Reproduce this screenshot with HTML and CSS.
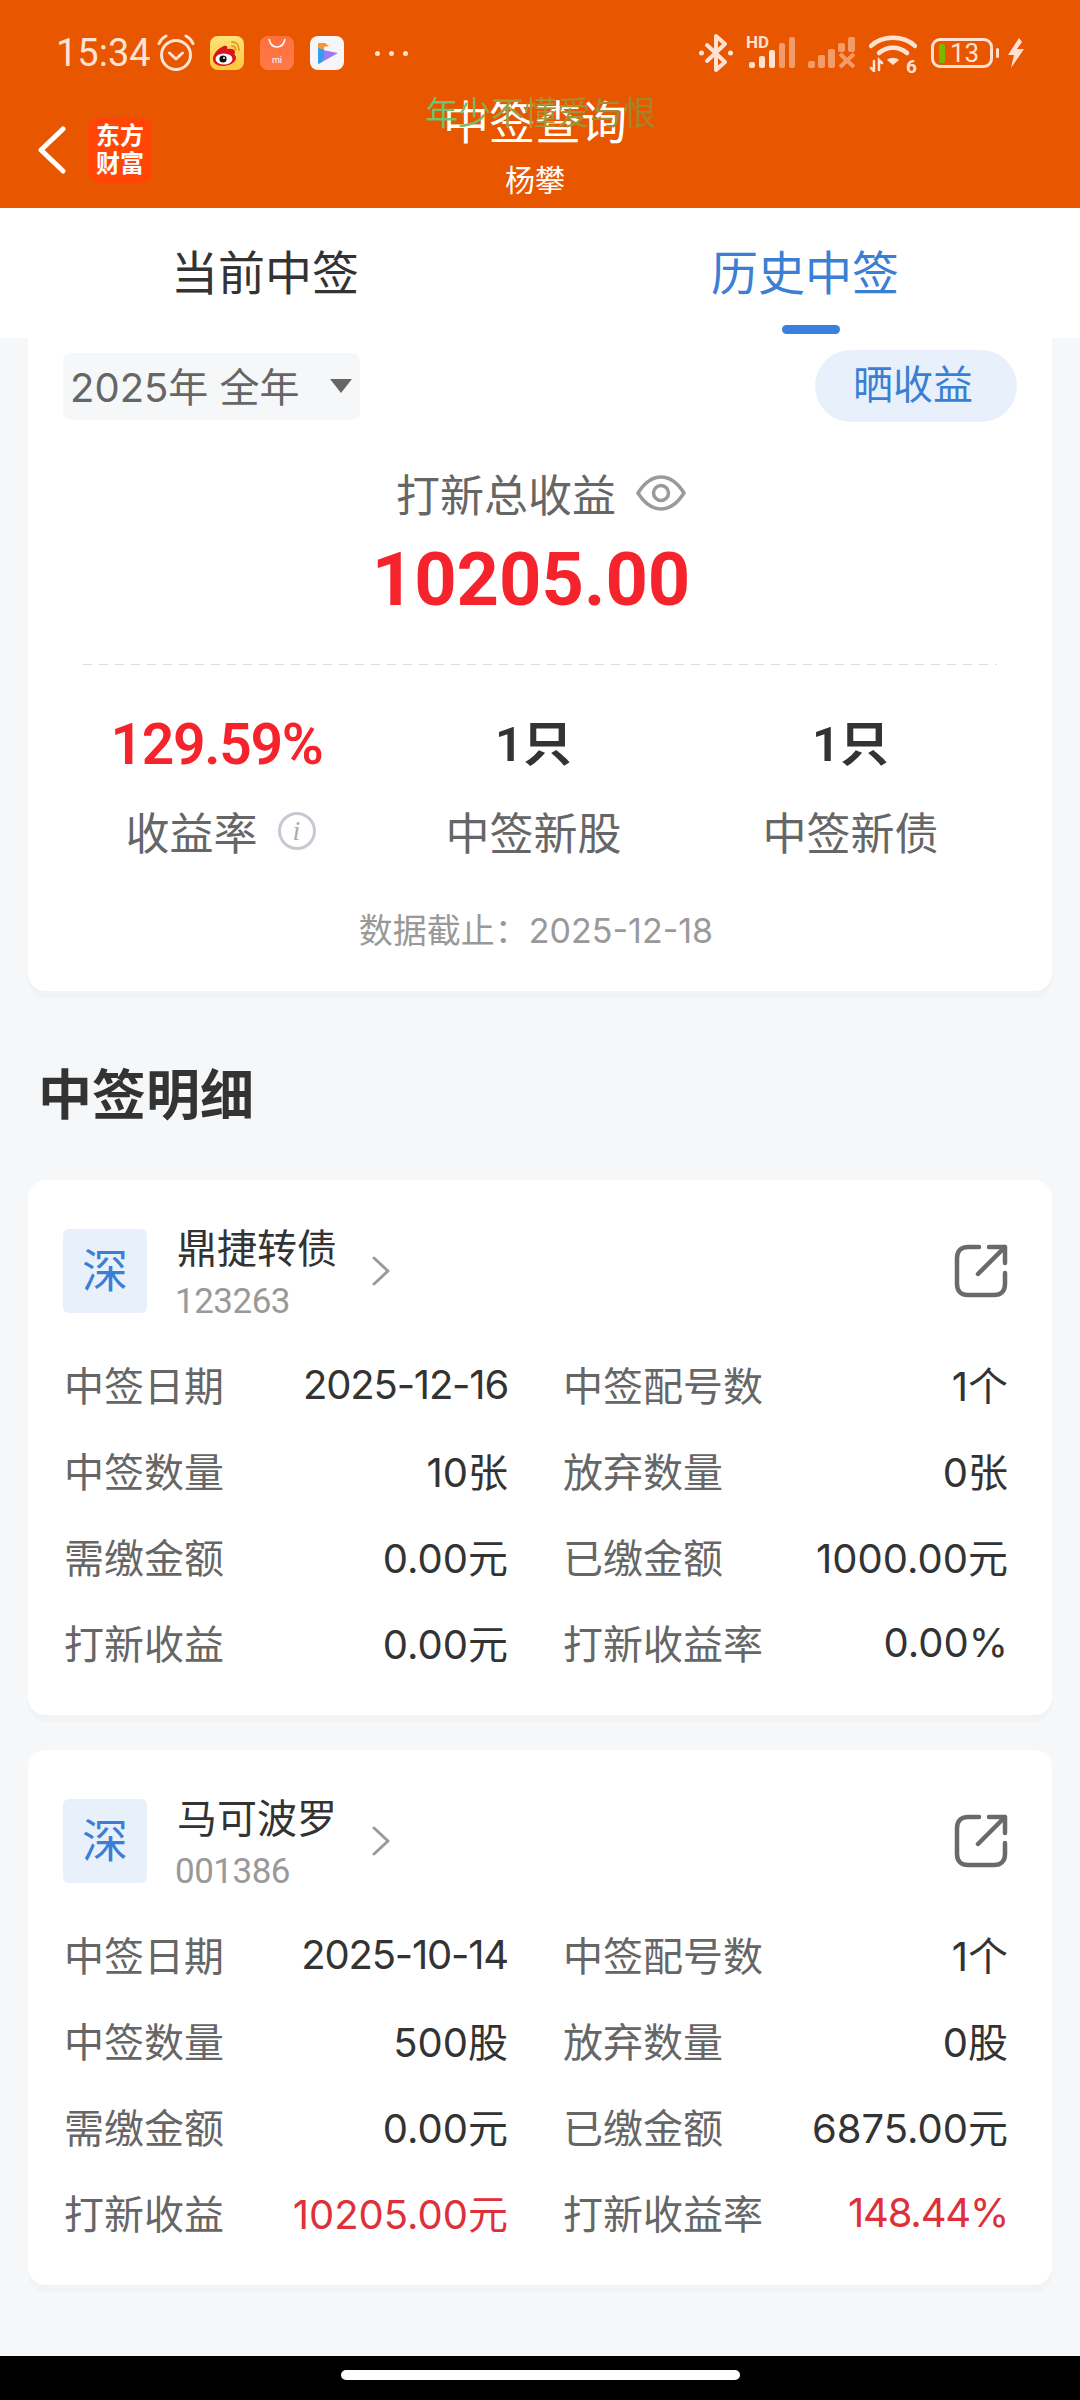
FILE: index.html
```html
<!DOCTYPE html>
<html lang="zh-CN">
<head>
    <meta charset="UTF-8">
    <meta name="viewport" content="width=device-width, initial-scale=1.0">
    <title>中签查询</title>
    <link rel="stylesheet" href="styles.css">
</head>
<body>
    <div class="page">
        <!-- Topo laranja: barra de status + navegação -->
        <header class="top">
            <div class="status">
                <div class="status-left">
                    <span class="time">15:34</span>
                    <svg class="ic-alarm" viewBox="0 0 40 38" fill="none" stroke="#ffe2d2" stroke-linecap="round" stroke-linejoin="round">
                        <circle cx="20" cy="21" r="14.5" stroke-width="3"/>
                        <path d="M13.5 19l6.5 6 6.5-6" stroke-width="3"/>
                        <path d="M3 9.5C4.5 6 7 3.5 10 2M37 9.5C35.500 6 33 3.500 30 2" stroke-width="3"/>
                    </svg>
                    <svg class="ic-app" viewBox="0 0 34 34">
                        <defs>
                            <linearGradient id="wb" x1="0" y1="0" x2="0" y2="1">
                                <stop offset="0" stop-color="#ffe27a"/>
                                <stop offset="1" stop-color="#fcc93a"/>
                            </linearGradient>
                        </defs>
                        <rect width="34" height="34" rx="8" fill="url(#wb)"/>
                        <path d="M3 23c0-5 5-11 11-13 3-1 4 1 3 3 4-1 8 0 8 3 0 1 0 2-1 2 1 1 2 2 2 4 0 4-6 8-13 8-6 0-10-3-10-7z" fill="#d9141c"/>
                        <ellipse cx="14" cy="23" rx="8.500" ry="5.500" fill="#fff"/>
                        <circle cx="13" cy="23" r="3.600" fill="#111"/>
                        <circle cx="14" cy="22" r="1" fill="#fff"/>
                        <path d="M22 6c4 0 7 3 7 8M22 10c2 0 3.500 1.500 3.500 4" fill="none" stroke="#eb9a22" stroke-width="2" stroke-linecap="round"/>
                    </svg>
                    <div class="ic-app mi-app">
                        <svg viewBox="0 0 34 12" class="mi-smile" fill="none" stroke="#fff" stroke-width="1.500"><path d="M9 1c1 5 4 8 8 8s7-3 8-8"/></svg>
                        <span class="mi-text">mi</span>
                    </div>
                    <svg class="ic-app" viewBox="0 0 34 34">
                        <rect width="34" height="34" rx="8" fill="#f6f6f9"/>
                        <path d="M8 7h7l4 3-5 1v6l-6 4z" fill="#f0993a"/>
                        <path d="M8 13l20 4-16 9-4 2z" fill="#9a7cf0"/>
                        <path d="M8 12l6 2v6l-2 6-4 2z" fill="#2f9df0"/>
                    </svg>
                    <div class="dots"><i></i><i></i><i></i></div>
                </div>
                <div class="status-right">
                    <svg class="ic-bt" viewBox="0 0 36 40" fill="none" stroke="#ffe2d2" stroke-width="4" stroke-linecap="round" stroke-linejoin="round">
                        <path d="M9 12l18 17-9 8V3l9 8L9 28"/>
                        <circle cx="3.500" cy="20" r="1.500" fill="#ffe2d2" stroke-width="2"/>
                        <circle cx="32.500" cy="20" r="1.500" fill="#ffe2d2" stroke-width="2"/>
                    </svg>
                    <div class="signal">
                        <span class="hd">HD</span>
                        <i class="b1"></i><i class="b2"></i><i class="b3"></i><i class="b4 dim"></i><i class="b5 dim"></i>
                    </div>
                    <svg class="ic-sig2" viewBox="0 0 48 32">
                        <g fill="#ffe2d2" opacity=".5">
                            <rect x="0" y="24" width="7" height="7" rx="2"/>
                            <rect x="10" y="18" width="7" height="13" rx="2"/>
                            <rect x="20" y="12" width="7" height="19" rx="2"/>
                            <rect x="30" y="6" width="7" height="9" rx="2"/>
                            <rect x="40" y="0" width="7" height="15" rx="2"/>
                            <path d="M32 17l14 13M46 17L32 30" stroke="#ffe2d2" stroke-width="4" fill="none"/>
                        </g>
                    </svg>
                    <svg class="ic-wifi" viewBox="0 0 48 38" fill="none" stroke="#ffe2d2" stroke-linecap="round">
                        <path d="M2 12C13 1 35 1 46 12" stroke-width="4.500"/>
                        <path d="M10 19c8-7 20-7 28 0" stroke-width="4.500"/>
                        <path d="M24 31l-6-5c3-3 9-3 12 0z" fill="#ffe2d2" stroke="none"/>
                        <path d="M5 27v10M2 34l3 3M10 36V26l3 3" stroke-width="2.500"/>
                    </svg>
                    <span class="wifi-six">6</span>
                    <div class="battery">
                        <div class="cell"><i class="level"></i><span>13</span></div>
                        <i class="tip"></i>
                    </div>
                    <svg class="ic-bolt" viewBox="0 0 18 30"><path d="M12 0L1 17h6l-3 13L17 11h-7l5-7z" fill="#ffe2d2"/></svg>
                </div>
            </div>
            <nav class="nav">
                <div class="nav-left">
                    <svg class="ic-back" viewBox="0 0 28 48" fill="none" stroke="#fff" stroke-width="5" stroke-linecap="round" stroke-linejoin="round"><path d="M25 3L3 24l22 21"/></svg>
                    <div class="logo"><span>东方</span><span>财富</span></div>
                </div>
                <div class="nav-title">
                    <div class="title">中签查询</div>
                    <div class="subtitle">杨攀</div>
                </div>
                <div class="float-danmu">年少不懂爱与恨</div>
            </nav>
        </header>

        <div class="tabs">
            <div class="tab">当前中签</div>
            <div class="tab active">历史中签<i class="tab-bar"></i></div>
        </div>

        <section class="summary card">
            <div class="summary-top">
                <div class="year-select"><span>2025年 全年</span><i class="caret"></i></div>
                <div class="share-btn">晒收益</div>
            </div>
            <div class="total-label">
                <span>打新总收益</span>
                <svg class="ic-eye" viewBox="0 0 50 36" fill="none" stroke="#9a9a9a" stroke-width="3.500">
                    <path d="M2 18C9 7 17 2 25 2s16 5 23 16c-7 11-15 16-23 16S9 29 2 18z"/>
                    <circle cx="25" cy="18" r="7.500"/>
                </svg>
            </div>
            <div class="total-value">10205.00</div>
            <div class="dashed"></div>
            <div class="stats">
                <div class="stat">
                    <div class="stat-value red">129.59%</div>
                    <div class="stat-label rate">收益率<span class="info">i</span></div>
                </div>
                <div class="stat">
                    <div class="stat-value count">1只</div>
                    <div class="stat-label">中签新股</div>
                </div>
                <div class="stat">
                    <div class="stat-value count">1只</div>
                    <div class="stat-label">中签新债</div>
                </div>
            </div>
            <div class="as-of">数据截止：2025-12-18</div>
        </section>

        <h2 class="section-title">中签明细</h2>

        <section class="item card">
            <div class="item-head">
                <div class="market">深</div>
                <div class="item-name">
                    <div class="name">鼎捷转债</div>
                    <div class="code">123263</div>
                </div>
                <svg class="ic-more" viewBox="0 0 18 30" fill="none" stroke="#9a9a9a" stroke-width="3" stroke-linecap="round" stroke-linejoin="round"><path d="M2 2l14 13L2 28"/></svg>
                <svg class="ic-open" viewBox="0 0 54 54" fill="none" stroke="#6a6a6a" stroke-width="4.500" stroke-linecap="round" stroke-linejoin="round">
                    <path d="M25 3H14C7 3 3 7 3 14v26c0 7 4 11 11 11h26c7 0 11-4 11-11V29"/>
                    <path d="M24 30L51 3M35 3h16v16"/>
                </svg>
            </div>
            <div class="rows">
                <div class="row"><span>中签日期</span><b class="tight">2025-12-16</b></div>
                <div class="row"><span>中签配号数</span><b>1个</b></div>
                <div class="row"><span>中签数量</span><b>10张</b></div>
                <div class="row"><span>放弃数量</span><b>0张</b></div>
                <div class="row"><span>需缴金额</span><b>0.00元</b></div>
                <div class="row"><span>已缴金额</span><b>1000.00元</b></div>
                <div class="row"><span>打新收益</span><b>0.00元</b></div>
                <div class="row"><span>打新收益率</span><b>0.00%</b></div>
            </div>
        </section>

        <section class="item card">
            <div class="item-head">
                <div class="market">深</div>
                <div class="item-name">
                    <div class="name">马可波罗</div>
                    <div class="code">001386</div>
                </div>
                <svg class="ic-more" viewBox="0 0 18 30" fill="none" stroke="#9a9a9a" stroke-width="3" stroke-linecap="round" stroke-linejoin="round"><path d="M2 2l14 13L2 28"/></svg>
                <svg class="ic-open" viewBox="0 0 54 54" fill="none" stroke="#6a6a6a" stroke-width="4.500" stroke-linecap="round" stroke-linejoin="round">
                    <path d="M25 3H14C7 3 3 7 3 14v26c0 7 4 11 11 11h26c7 0 11-4 11-11V29"/>
                    <path d="M24 30L51 3M35 3h16v16"/>
                </svg>
            </div>
            <div class="rows">
                <div class="row"><span>中签日期</span><b class="tight">2025-10-14</b></div>
                <div class="row"><span>中签配号数</span><b>1个</b></div>
                <div class="row"><span>中签数量</span><b>500股</b></div>
                <div class="row"><span>放弃数量</span><b>0股</b></div>
                <div class="row"><span>需缴金额</span><b>0.00元</b></div>
                <div class="row"><span>已缴金额</span><b>6875.00元</b></div>
                <div class="row"><span>打新收益</span><b class="loss">10205.00元</b></div>
                <div class="row"><span>打新收益率</span><b class="loss tight">148.44%</b></div>
            </div>
        </section>

        <div class="home-bar"><i></i></div>
    </div>
</body>
</html>
```

FILE: styles.css
```css
/* Geral */
* {
    box-sizing: border-box;
}

body {
    margin: 0;
    padding: 0;
    background-color: #f6f7f9;
    color: #333;
    font-family: Roboto, "Noto Sans CJK SC", sans-serif;
}

i {
    display: block;
    font-style: normal;
}

.page {
    position: relative;
    width: 1080px;
    height: 2400px;
    overflow: hidden;
}

/* Topo */
.top {
    height: 208px;
    background-color: #e85600;
}

.status {
    display: flex;
    justify-content: space-between;
    align-items: center;
    height: 100px;
    padding: 6px 55px 0 56px;
    color: #ffe2d2;
}

.status-left, .status-right {
    display: flex;
    align-items: center;
}

.time {
    font-size: 38px;
    width: 96px;
}

.ic-alarm {
    width: 40px;
    height: 38px;
    margin-left: 4px;
    margin-right: 14px;
}

.ic-app {
    width: 34px;
    height: 34px;
    margin-right: 16px;
}

.mi-app {
    display: flex;
    flex-direction: column;
    align-items: center;
    border-radius: 8px;
    background: linear-gradient(#ff7040, #ff7a48);
}

.mi-smile {
    width: 34px;
    height: 12px;
    margin-top: 2px;
}

.mi-text {
    color: #fff;
    font-size: 9px;
    line-height: 12px;
    margin-top: 4px;
}

.dots {
    display: flex;
    gap: 9px;
    margin-left: 15px;
}

.dots i {
    width: 5px;
    height: 5px;
    border-radius: 50%;
    background-color: #ffe2d2;
}

.ic-bt {
    width: 36px;
    height: 40px;
}

.signal {
    position: relative;
    display: flex;
    align-items: flex-end;
    gap: 4px;
    width: 50px;
    height: 32px;
    margin-left: 12px;
    margin-top: -2px;
    padding-left: 3px;
}

.signal i {
    width: 6px;
    border-radius: 2px;
    background-color: #ffe2d2;
}

.signal .b1 { height: 6px; }
.signal .b2 { height: 12px; }
.signal .b3 { height: 18px; }
.signal .b4 { height: 25px; }
.signal .b5 { height: 31px; }

.signal .dim {
    opacity: 0.5;
}

.hd {
    position: absolute;
    left: 0;
    top: -1px;
    font-size: 17px;
    font-weight: 700;
    line-height: 15px;
}

.ic-sig2 {
    width: 48px;
    height: 32px;
    margin-left: 12px;
}

.ic-wifi {
    width: 48px;
    height: 38px;
    margin-left: 13px;
}

.wifi-six {
    position: absolute;
    left: 906px;
    top: 58px;
    font-size: 19px;
    font-weight: 700;
    line-height: 18px;
}

.battery {
    display: flex;
    align-items: center;
    margin-left: 14px;
}

.cell {
    display: flex;
    align-items: center;
    width: 62px;
    height: 30px;
    padding: 0 5px;
    border: 3px solid #ffe2d2;
    border-radius: 9px;
}

.level {
    width: 6px;
    height: 19px;
    border-radius: 2px;
    background-color: #7ab800;
}

.cell span {
    font-size: 26px;
    line-height: 24px;
    margin-left: 5px;
}

.tip {
    width: 3px;
    height: 10px;
    margin-left: 3px;
    border-radius: 2px;
    background-color: #ffe2d2;
}

.ic-bolt {
    width: 18px;
    height: 30px;
    margin-left: 8px;
}

/* Navegação */
.nav {
    position: relative;
    display: grid;
    grid-template-columns: 1fr auto 1fr;
    height: 108px;
    padding-right: 10px;
}

.nav-left {
    display: flex;
    align-items: center;
    padding: 0 0 8px 38px;
}

.ic-back {
    width: 28px;
    height: 48px;
}

.logo {
    display: flex;
    flex-direction: column;
    align-items: center;
    justify-content: center;
    width: 64px;
    height: 66px;
    margin-left: 22px;
    border-radius: 12px;
    background-color: #ff4606;
    color: #fff;
    font-size: 24px;
    font-weight: 700;
    line-height: 28px;
}

.nav-title {
    position: relative;
    text-align: center;
    color: #fff;
}

.title {
    font-size: 46px;
    line-height: 56px;
    margin-top: -5px;
}

.subtitle {
    font-size: 30px;
    line-height: 40px;
    margin-top: 10px;
}

.float-danmu {
    position: absolute;
    left: 425px;
    top: -4px;
    font-size: 33px;
    line-height: 36px;
    color: transparent;
    background: linear-gradient(to right, #74c26c 0, #74c26c 14%, #a69a3a 40%, #a0862c 100%);
    -webkit-background-clip: text;
    background-clip: text;
}

/* Abas */
.tabs {
    display: grid;
    grid-template-columns: 530px 550px;
    height: 130px;
    background-color: #fff;
}

.tab {
    position: relative;
    display: flex;
    justify-content: center;
    font-size: 47px;
    line-height: 132px;
}

.tab.active {
    color: #3b7fd4;
}

.tab-bar {
    position: absolute;
    left: 252px;
    bottom: 6px;
    width: 58px;
    height: 9px;
    border-radius: 5px;
    background-color: #3a80de;
}

/* Cartões */
.card {
    margin: 0 28px;
    border-radius: 18px;
    background-color: #fff;
    box-shadow: 0 7px 0 #f2f3f5;
}

.summary {
    height: 653px;
    padding: 12px 35px 0;
    border-radius: 0 0 18px 18px;
}

.summary-top {
    display: flex;
    justify-content: space-between;
    align-items: center;
    height: 72px;
}

.year-select {
    display: flex;
    align-items: center;
    justify-content: space-between;
    width: 297px;
    height: 67px;
    padding: 0 8px 3px 7px;
    border-radius: 8px;
    background-color: #f6f7f9;
    color: #666;
    font-family: Inter, "Noto Sans CJK SC", sans-serif;
    font-size: 40px;
}

.caret {
    width: 0;
    height: 0;
    margin-top: 3px;
    border-left: 11px solid transparent;
    border-right: 11px solid transparent;
    border-top: 14px solid #666;
}

.share-btn {
    width: 202px;
    height: 72px;
    padding-right: 6px;
    border-radius: 36px;
    background-color: #e8f1fb;
    color: #3b7fd4;
    font-size: 40px;
    line-height: 72px;
    text-align: center;
}

.total-label {
    display: flex;
    justify-content: center;
    align-items: center;
    gap: 20px;
    height: 60px;
    margin-top: 41px;
    padding-left: 2px;
    color: #666;
    font-size: 44px;
}

.ic-eye {
    width: 50px;
    height: 36px;
}

.total-value {
    height: 90px;
    margin-top: 12px;
    padding-right: 18px;
    color: #f5242c;
    font-size: 74px;
    font-weight: 700;
    line-height: 90px;
    text-align: center;
}

.dashed {
    height: 1px;
    margin: 39px 20px 0;
    background: repeating-linear-gradient(to right, #dcdcdc 0, #dcdcdc 9px, transparent 9px, transparent 16px);
}

.stats {
    display: grid;
    grid-template-columns: repeat(3, 317px);
    margin: 45px 0 0 -5px;
}

.stat {
    text-align: center;
}

.stat-value {
    font-size: 54px;
    font-weight: 600;
    line-height: 70px;
}

.stat-value.red {
    color: #f5242c;
    font-size: 57px;
    letter-spacing: -1.300px;
}

.stat-value.count {
    font-size: 49px;
}

.stat-label {
    display: flex;
    justify-content: center;
    align-items: center;
    height: 60px;
    margin-top: 21px;
    color: #666;
    font-size: 44px;
}

.stat-label.rate {
    padding-left: 8px;
}

.info {
    width: 38px;
    height: 38px;
    margin-left: 20px;
    border: 3px solid #c6cad0;
    border-radius: 50%;
    color: #a8adb3;
    font-family: "Liberation Serif", serif;
    font-size: 28px;
    font-style: italic;
    line-height: 32px;
    text-align: center;
}

.as-of {
    margin-top: 45px;
    padding-right: 8px;
    color: #999;
    font-family: Inter, "Noto Sans CJK SC", sans-serif;
    font-size: 34px;
    line-height: 50px;
    text-align: center;
}

.section-title {
    margin: 71px 0 48px 38px;
    color: #333;
    font-size: 54px;
    font-weight: 700;
    line-height: 70px;
}

/* Cartão de detalhe */
.item {
    height: 535px;
    margin-bottom: 35px;
    padding: 49px 44px 0 35px;
}

.item-head {
    display: flex;
    align-items: center;
    height: 84px;
}

.market {
    width: 84px;
    height: 84px;
    border-radius: 6px;
    background-color: #e8f1fb;
    color: #3b7fd4;
    font-size: 46px;
    line-height: 84px;
    text-align: center;
}

.item-name {
    width: 195px;
    margin-left: 30px;
    padding-top: 13px;
}

.name {
    font-size: 40px;
    line-height: 50px;
    color: #333;
    margin-top: -8px;
}

.code {
    color: #999;
    font-size: 35px;
    line-height: 42px;
    letter-spacing: -0.5px;
    margin-top: 6px;
    margin-left: -2px;
}

.ic-more {
    width: 18px;
    height: 30px;
}

.ic-open {
    width: 54px;
    height: 54px;
    margin-left: auto;
}

.rows {
    display: grid;
    grid-template-columns: 444px 445px;
    column-gap: 55px;
    margin-top: 28px;
    margin-left: 1px;
}

.row {
    display: flex;
    justify-content: space-between;
    align-items: center;
    height: 86px;
    color: #666;
    font-size: 40px;
}

.row b {
    color: #333;
    font-family: Inter, "Noto Sans CJK SC", sans-serif;
    font-weight: 400;
}

.row b.tight {
    letter-spacing: -1.200px;
}

.row b.loss {
    color: #de3038;
}

/* Barra inferior */
.home-bar {
    position: absolute;
    left: 0;
    bottom: 0;
    width: 100%;
    height: 44px;
    padding-top: 14px;
    background-color: #000;
}

.home-bar i {
    width: 399px;
    height: 10px;
    margin: 0 auto;
    border-radius: 5px;
    background-color: #fff;
}
```
